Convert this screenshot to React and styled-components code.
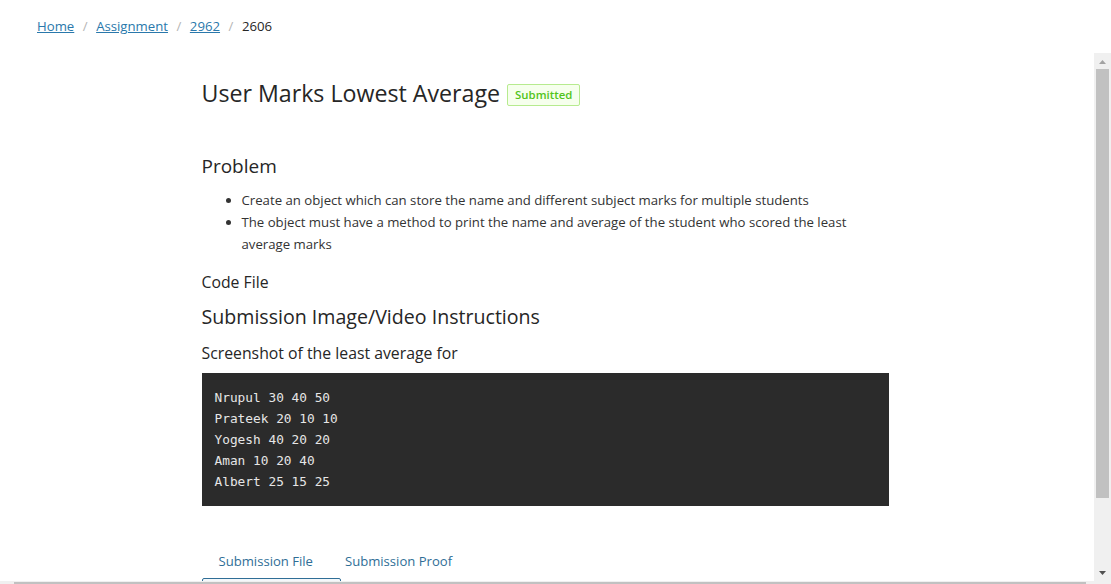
import React from 'react'
import styled, { createGlobalStyle } from 'styled-components'

const GlobalStyle = createGlobalStyle`
  html, body {
    margin: 0;
    padding: 0;
    height: 100%;
    overflow: hidden;
    background: #fff;
    font-family: 'Open Sans', 'Noto Sans', sans-serif;
    color: #262626;
  }
`

const Page = styled.div`
  display: flex;
  flex-direction: column;
  height: 100vh;
  overflow: hidden;
`

const Crumbs = styled.nav`
  display: flex;
  align-items: center;
  gap: 8.5px;
  height: 53px;
  flex-shrink: 0;
  padding-left: 37px;
  padding-bottom: 1px;
  font-size: 13.2px;
  box-sizing: border-box;
`
const CrumbLink = styled.a`
  color: #2a78ab;
  text-decoration: underline;
  cursor: pointer;
`
const Sep = styled.span`
  color: #b5b5b5;
`
const Current = styled.span`
  color: #262626;
`

// scroll area: viewport with its own drawn scrollbars
const Frame = styled.div`
  flex-shrink: 0;
  display: grid;
  grid-template-columns: 1fr 17px;
  grid-template-rows: 528px 17px;
  background: #f0f0f0;
`
const Viewport = styled.div`
  background: #fff;
  overflow: hidden;
`
const VBar = styled.div`
  display: flex;
  flex-direction: column;
  align-items: center;
  background: #f0f0f0;
`
const Arrow = styled.div`
  height: 17px;
  display: flex;
  align-items: center;
  justify-content: center;
  color: ${p => p.$dim ? '#a3a3a3' : '#505050'};
`
const Track = styled.div`
  flex: 1;
  width: 100%;
  display: flex;
  flex-direction: column;
`
const VThumb = styled.div`
  margin: -1px 2px 0;
  height: 429px;
  background: #c1c1c1;
`
const HBar = styled.div`
  background: #f0f0f0;
  padding: 1px 8px 0 14px;
`
const HThumb = styled.div`
  height: 14px;
  background: #c1c1c1;
`
const Corner = styled.div`
  background: #f0f0f0;
`

const Content = styled.main`
  width: 687px;
  margin: 0 auto;
  padding: 24px 0 0 0;
  transform: translateX(-2px);
`

const TitleRow = styled.div`
  display: flex;
  align-items: center;
  gap: 7px;
`
const Title = styled.h1`
  margin: 0;
  font-size: 23.2px;
  font-weight: 400;
  color: #262626;
  line-height: 32px;
`
const Badge = styled.span`
  display: inline-block;
  margin-top: 4px;
  padding: 0 7px;
  height: 20px;
  line-height: 20px;
  font-size: 11.4px;
  font-weight: 600;
  color: #52c41a;
  background: #f6ffed;
  border: 1px solid #b7eb8f;
  border-radius: 2px;
`

const SectionTitle = styled.h2`
  margin: ${p => p.$top}px 0 0;
  font-size: ${p => p.$size || 19}px;
  font-weight: 400;
  line-height: 28px;
  color: #262626;
`
const SubTitle = styled.h3`
  margin: ${p => p.$top}px 0 0;
  font-size: 15.8px;
  font-weight: 500;
  line-height: 22px;
  color: #262626;
`

const List = styled.ul`
  margin: 9px 0 0;
  padding-left: 40px;
  font-size: 13.2px;
  line-height: 22px;
  color: #333;
  width: 670px;
  box-sizing: border-box;
`

const CodeBlock = styled.pre`
  margin: 9px 0 0;
  padding: 14px 13px;
  background: #2b2b2b;
  color: #e6e6e6;
  font-family: 'DejaVu Sans Mono', 'Liberation Mono', monospace;
  font-size: 12.8px;
  line-height: 21px;
  font-weight: 400;
`

const Tabs = styled.div`
  display: flex;
  margin-top: 44px;
  margin-left: 1px;
`
const Tab = styled.div`
  padding: 0 16px;
  font-size: 13.1px;
  line-height: 22px;
  color: #2f6e96;
`
const Panel = styled.div`
  margin-top: 6px;
  width: 139px;
  height: 30px;
  border: 1px solid #2f6e96;
  border-radius: 2px 2px 0 0;
  background: #f4f8fb;
  box-sizing: border-box;
`

const Tri = ({ up }) => (
  <svg width="7" height="4" viewBox="0 0 7 4">
    <path d={up ? 'M0 4 L3.5 0 L7 4 Z' : 'M0 0 L7 0 L3.5 4 Z'} fill="currentColor" />
  </svg>
)

const students = [
  'Nrupul 30 40 50',
  'Prateek 20 10 10',
  'Yogesh 40 20 20',
  'Aman 10 20 40',
  'Albert 25 15 25',
]

export default function App() {
  return (
    <Page>
      <GlobalStyle />
      <Crumbs>
        <CrumbLink>Home</CrumbLink>
        <Sep>/</Sep>
        <CrumbLink>Assignment</CrumbLink>
        <Sep>/</Sep>
        <CrumbLink>2962</CrumbLink>
        <Sep>/</Sep>
        <Current>2606</Current>
      </Crumbs>
      <Frame>
        <Viewport>
          <Content>
            <TitleRow>
              <Title>User Marks Lowest Average</Title>
              <Badge>Submitted</Badge>
            </TitleRow>
            <SectionTitle $top={43}>Problem</SectionTitle>
            <List>
              <li>Create an object which can store the name and different subject marks for multiple students</li>
              <li>The object must have a method to print the name and average of the student who scored the least average marks</li>
            </List>
            <SubTitle $top={16}>Code File</SubTitle>
            <SectionTitle $top={10} $size={19.6}>Submission Image/Video Instructions</SectionTitle>
            <SubTitle $top={11}>Screenshot of the least average for</SubTitle>
            <CodeBlock>{students.join('\n')}</CodeBlock>
            <Tabs>
              <Tab>Submission File</Tab>
              <Tab>Submission Proof</Tab>
            </Tabs>
            <Panel />
          </Content>
        </Viewport>
        <VBar>
          <Arrow $dim><Tri up /></Arrow>
          <Track>
            <VThumb />
          </Track>
          <Arrow><Tri /></Arrow>
        </VBar>
        <HBar>
          <HThumb />
        </HBar>
        <Corner />
      </Frame>
    </Page>
  )
}
